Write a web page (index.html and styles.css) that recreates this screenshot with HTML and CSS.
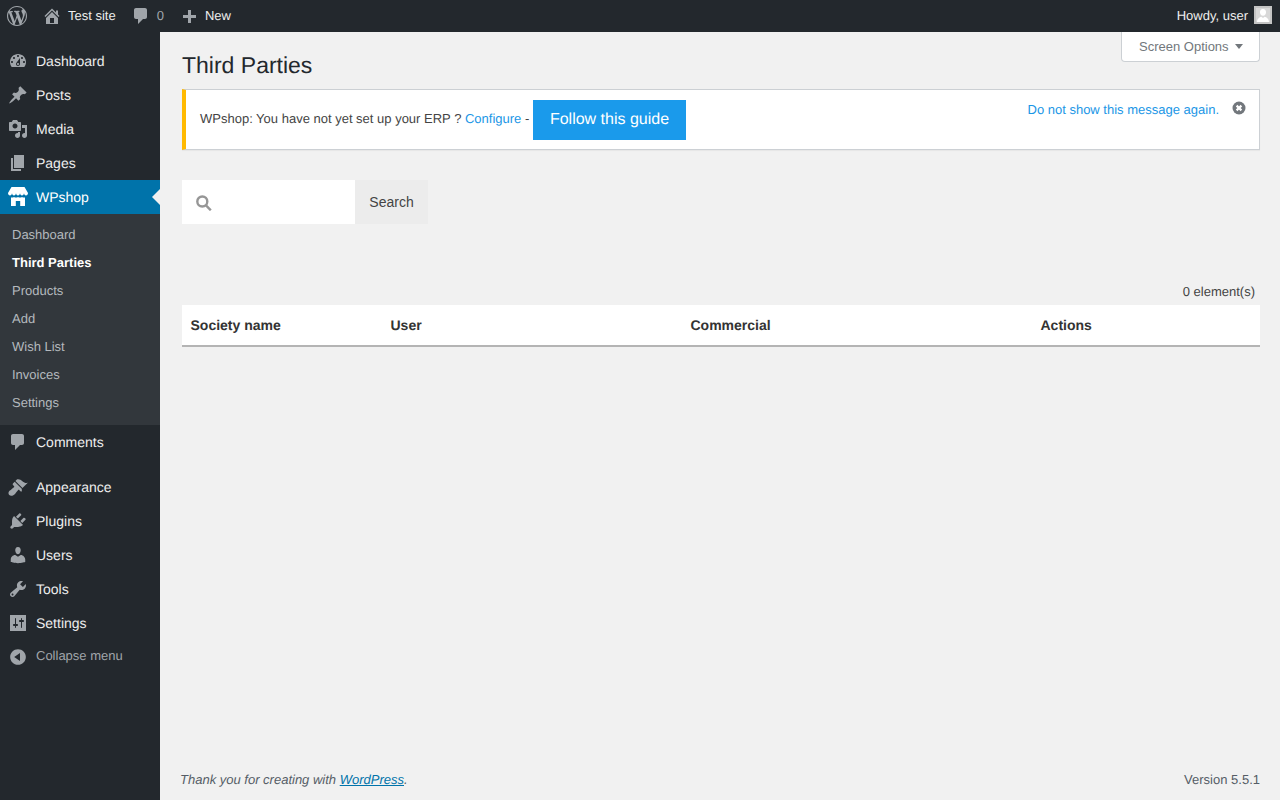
FILE: index.html
```html
<!DOCTYPE html>
<html lang="en">
<head>
    <meta charset="UTF-8">
    <meta name="viewport" content="width=device-width, initial-scale=1.0">
    <title>Third Parties</title>
    <link rel="stylesheet" href="styles.css">
</head>
<body>
    <header class="adminbar">
        <a class="bar-logo" href="#">
            <svg class="bar-icon" viewBox="0 0 20 20"><path d="M20 10c0-5.51-4.49-10-10-10C4.48 0 0 4.49 0 10c0 5.52 4.48 10 10 10 5.51 0 10-4.48 10-10zM7.78 15.37L4.37 6.22c.55-.02 1.17-.08 1.17-.08.5-.06.44-1.13-.06-1.11 0 0-1.45.11-2.37.11-.18 0-.37 0-.58-.01C4.12 2.69 6.87 1.11 10 1.11c2.33 0 4.45.87 6.05 2.34-.68-.11-1.65.39-1.65 1.58 0 .74.45 1.36.9 2.1.35.61.55 1.36.55 2.46 0 1.49-1.4 5-1.4 5l-3.03-8.37c.54-.02.82-.17.82-.17.5-.05.44-1.25-.06-1.22 0 0-1.44.12-2.38.12-.87 0-2.33-.12-2.33-.12-.5-.03-.56 1.2-.06 1.22l.92.08 1.26 3.41zM17.41 10c.24-.64.74-1.87.43-4.25.7 1.29 1.05 2.71 1.05 4.25 0 3.29-1.73 6.24-4.4 7.78.97-2.59 1.94-5.2 2.92-7.78zM6.1 18.09C3.12 16.65 1.11 13.53 1.11 10c0-1.3.23-2.48.72-3.59C3.25 10.3 4.67 14.2 6.1 18.09zm4.03-6.63l2.58 6.98c-.86.29-1.76.45-2.71.45-.79 0-1.57-.11-2.29-.33.81-2.38 1.62-4.74 2.42-7.1z"/></svg>
        </a>
        <a class="bar-item bar-home" href="#">
            <svg class="bar-icon" viewBox="0 0 20 20"><path d="M16 8.5l1.53 1.53-1.06 1.06L10 4.62l-6.47 6.47-1.06-1.06L10 2.5l4 4v-2h2v4zm-6-2.46l6 5.99V18H4v-5.97zM12 17v-5H8v5h4z"/></svg>
            Test site
        </a>
        <a class="bar-item bar-comments" href="#">
            <svg class="bar-icon" viewBox="0 0 20 20"><path d="M5 2h9c1.1 0 2 .9 2 2v7c0 1.1-.9 2-2 2h-2l-5 5v-5H5c-1.1 0-2-.9-2-2V4c0-1.1.9-2 2-2z"/></svg>
            0
        </a>
        <a class="bar-item" href="#">
            <svg class="bar-icon" viewBox="0 0 20 20"><path d="M17 9v3h-5v5H9v-5H4V9h5V4h3v5h5z"/></svg>
            New
        </a>
        <a class="bar-howdy" href="#">
            Howdy, user
            <span class="avatar">
                <svg viewBox="0 0 18 18"><path d="M0 0h18v18H0z" fill="#c4c4c4"/><path d="M2 2h14v14H2z" fill="#d8d8d8"/><path d="M9 3c2 0 3.300 1.700 3 3.800-.2 1.400-1 3-3 3s-2.800-1.600-3-3C5.700 4.700 7 3 9 3zM3 16c0-3 2.500-4.800 4.300-5.200L9 12l1.700-1.200C12.500 11.200 15 13 15 16z" fill="#fff"/></svg>
            </span>
        </a>
    </header>

    <div class="layout">
        <nav class="sidebar">
            <ul class="menu">
                <li class="menu-item">
                    <svg class="menu-icon" viewBox="0 0 20 20"><path d="M3.760 16h12.480c1.100-1.370 1.760-3.110 1.760-5 0-4.420-3.580-8-8-8s-8 3.580-8 8c0 1.890.660 3.630 1.760 5zM10 4c.55 0 1 .45 1 1s-.45 1-1 1-1-.45-1-1 .45-1 1-1zM6 6c.55 0 1 .45 1 1s-.45 1-1 1-1-.45-1-1 .45-1 1-1zm8 0c.55 0 1 .45 1 1s-.45 1-1 1-1-.45-1-1 .45-1 1-1zm-5.370 5.550L12 7v6c0 1.100-.9 2-2 2s-2-.9-2-2c0-.57.24-1.080.63-1.450zM4 10c.55 0 1 .45 1 1s-.45 1-1 1-1-.45-1-1 .45-1 1-1zm12 0c.55 0 1 .45 1 1s-.45 1-1 1-1-.45-1-1 .45-1 1-1zm-5 3c0-.55-.45-1-1-1s-1 .45-1 1 .45 1 1 1 1-.45 1-1z"/></svg>
                    Dashboard
                </li>
                <li class="menu-item">
                    <svg class="menu-icon" viewBox="0 0 20 20"><path d="M10.440 3.020l1.820-1.820 6.360 6.350-1.830 1.820c-1.050-.68-2.480-.57-3.410.36l-.75.75c-.92.93-1.040 2.350-.35 3.410l-1.830 1.820-2.410-2.410-2.800 2.790c-.42.42-3.380 2.710-3.800 2.290s1.860-3.390 2.280-3.810l2.790-2.790L4.100 9.360l1.830-1.820c1.050.69 2.480.57 3.400-.36l.75-.75c.93-.92 1.050-2.350.36-3.410z"/></svg>
                    Posts
                </li>
                <li class="menu-item">
                    <svg class="menu-icon" viewBox="0 0 20 20"><path d="M13 11V4c0-.55-.45-1-1-1h-1.670L9 1H5L3.670 3H2c-.55 0-1 .45-1 1v7c0 .55.45 1 1 1h10c.55 0 1-.45 1-1zM7 4.500c1.380 0 2.500 1.120 2.500 2.500S8.380 9.500 7 9.500 4.500 8.380 4.500 7 5.620 4.500 7 4.500zM14 6h5v10.500c0 1.380-1.120 2.500-2.500 2.500S14 17.880 14 16.500s1.120-2.500 2.500-2.500c.17 0 .34.02.5.05V9h-3V6zm-4 8.050V13h2v3.500c0 1.380-1.120 2.500-2.500 2.500S7 17.880 7 16.500 8.120 14 9.500 14c.17 0 .34.02.5.05z"/></svg>
                    Media
                </li>
                <li class="menu-item">
                    <svg class="menu-icon" viewBox="0 0 20 20"><path d="M6 15V2h10v13H6zm-1 1h8v2H3V5h2v11z"/></svg>
                    Pages
                </li>
                <li class="menu-item menu-current">
                    <svg class="menu-icon" viewBox="0 0 20 20"><path d="M3.500 0h13L20 6c0 1.400-.9 2.500-2 2.500S16 7.400 16 6c0 1.400-.9 2.500-2 2.500S12 7.400 12 6c0 1.400-.9 2.500-2 2.500S8 7.400 8 6c0 1.400-.9 2.500-2 2.500S4 7.400 4 6c0 1.400-.9 2.500-2 2.500S0 7.400 0 6zM3 10.500c1.200.3 2.200 0 3-.5 1.200.7 2.800.7 4 0 1.200.7 2.800.7 4 0 .8.5 1.800.8 3 .5V19h-4.800v-5H7.800v5H3z"/></svg>
                    WPshop
                </li>
                <li class="submenu">
                    <a href="#">Dashboard</a>
                    <a href="#" class="submenu-current">Third Parties</a>
                    <a href="#">Products</a>
                    <a href="#">Add</a>
                    <a href="#">Wish List</a>
                    <a href="#">Invoices</a>
                    <a href="#">Settings</a>
                </li>
                <li class="menu-item menu-gap">
                    <svg class="menu-icon" viewBox="0 0 20 20"><path d="M5 2h9c1.100 0 2 .9 2 2v7c0 1.100-.9 2-2 2h-2l-5 5v-5H5c-1.100 0-2-.9-2-2V4c0-1.100.9-2 2-2z"/></svg>
                    Comments
                </li>
                <li class="menu-item">
                    <svg class="menu-icon" viewBox="0 0 20 20"><path d="M14.480 11.060L7.410 3.990l1.500-1.500c.5-.56 2.300-.47 3.510.32 1.210.8 1.430 1.280 2.910 2.100 1.180.64 2.450 1.260 4.450.85zm-.71.71L6.700 4.700 4.930 6.470c-.39.39-.39 1.020 0 1.410l1.060 1.060c.39.39.39 1.030 0 1.420-.6.6-1.430 1.110-2.210 1.690-.35.26-.7.53-1.010.84C1.430 13.230.4 14.910.47 16.270c.06 1.360 1.300 2.390 2.660 2.420 1.390.02 3.050-1.030 4.330-2.310.3-.31.58-.66.84-1.010.58-.78 1.090-1.610 1.690-2.210.39-.39 1.030-.39 1.420 0l1.060 1.060c.39.39 1.020.39 1.410 0z"/></svg>
                    Appearance
                </li>
                <li class="menu-item">
                    <svg class="menu-icon" viewBox="0 0 20 20"><path d="M13.110 4.360L9.870 7.600 8 5.730l3.240-3.240c.35-.34 1.050-.2 1.560.32.52.51.66 1.210.31 1.550zm-8 1.770l.91-1.120 9.010 9.010-1.190.84c-.71.71-2.630 1.160-3.820 1.160H6.140L4.900 17.260c-.59.59-1.540.59-2.120 0-.59-.58-.59-1.530 0-2.120l1.240-1.240v-3.880c0-1.130.4-3.190 1.090-3.890zm7.260 3.970l3.240-3.240c.34-.35 1.040-.21 1.550.31.52.51.66 1.210.31 1.550l-3.240 3.250z"/></svg>
                    Plugins
                </li>
                <li class="menu-item">
                    <svg class="menu-icon" viewBox="0 0 20 20"><path d="M10 9.250c-2.270 0-2.730-3.440-2.730-3.440C7 4.020 7.820 2 9.970 2c2.160 0 2.980 2.020 2.710 3.810 0 0-.41 3.440-2.680 3.440zm0 2.570L12.720 10c2.390 0 4.520 2.330 4.520 4.530v2.490s-3.650 1.130-7.240 1.130c-3.650 0-7.240-1.130-7.240-1.130v-2.490c0-2.250 1.940-4.480 4.470-4.480z"/></svg>
                    Users
                </li>
                <li class="menu-item">
                    <svg class="menu-icon" viewBox="0 0 20 20"><path d="M16.680 9.770c-1.340 1.340-3.300 1.670-4.950.99l-5.410 6.520c-.99.99-2.590.99-3.580 0s-.99-2.590 0-3.570l6.520-5.420c-.68-1.650-.35-3.610.99-4.950 1.280-1.280 3.120-1.620 4.720-1.060l-2.890 2.890 2.820 2.820 2.860-2.870c.53 1.580.18 3.390-1.080 4.650zM3.810 16.210c.4.39 1.040.39 1.430 0 .4-.4.4-1.040 0-1.430-.39-.4-1.030-.4-1.430 0-.39.39-.39 1.030 0 1.430z"/></svg>
                    Tools
                </li>
                <li class="menu-item">
                    <svg class="menu-icon" viewBox="0 0 20 20"><path d="M18 16V2H2v16h16zM8 11h1c.55 0 1 .45 1 1s-.45 1-1 1H8v1.500c0 .28-.22.5-.5.5s-.5-.22-.5-.5V13H6c-.55 0-1-.45-1-1s.45-1 1-1h1V5.500c0-.28.22-.5.5-.5s.5.22.5.5V11zm5-2h-1c-.55 0-1-.45-1-1s.45-1 1-1h1V5.500c0-.28.22-.5.5-.5s.5.22.5.5V7h1c.55 0 1 .45 1 1s-.45 1-1 1h-1v5.500c0 .28-.22.5-.5.5s-.5-.22-.5-.5V9z"/></svg>
                    Settings
                </li>
                <li class="menu-collapse">
                    <svg class="menu-icon" viewBox="0 0 20 20"><path d="M10 2.160c4.330 0 7.840 3.510 7.840 7.840s-3.510 7.840-7.840 7.840S2.160 14.330 2.160 10 5.710 2.160 10 2.160zm2 11.720V6.120L6.180 9.970z"/></svg>
                    <span class="collapse-label">Collapse menu</span>
                </li>
            </ul>
        </nav>

        <main class="content">
            <div class="wrap">
                <button class="screen-options">Screen Options <span class="caret"></span></button>
                <h1>Third Parties</h1>

                <div class="notice">
                    <p class="notice-text">WPshop: You have not yet set up your ERP ? <a href="#">Configure</a> - <a href="#" class="guide-btn">Follow this guide</a></p>
                    <div class="notice-dismiss">
                        <a href="#">Do not show this message again.</a>
                        <svg class="close-icon" viewBox="0 0 14 14"><circle cx="7" cy="7" r="6.500"/><path d="M4.600 4.600l4.800 4.800M9.400 4.600l-4.800 4.800"/></svg>
                    </div>
                </div>

                <form class="search-bar">
                    <div class="search-input">
                        <svg class="search-icon" viewBox="0 0 16 16"><circle cx="6.300" cy="6.500" r="5"/><path d="M10 10.300l4.800 5"/></svg>
                    </div>
                    <button type="button" class="search-btn">Search</button>
                </form>

                <p class="count">0 element(s)</p>
                <table class="list">
                    <thead>
                        <tr>
                            <th class="col-society">Society name</th>
                            <th class="col-user">User</th>
                            <th class="col-commercial">Commercial</th>
                            <th>Actions</th>
                        </tr>
                    </thead>
                </table>
            </div>

            <footer class="footer">
                <span class="thanks">Thank you for creating with <a href="#">WordPress</a>.</span>
                <span>Version 5.5.1</span>
            </footer>
        </main>
    </div>
</body>
</html>
```

FILE: styles.css
```css
* {
    box-sizing: border-box;
}

html, body {
    height: 100%;
}

body {
    margin: 0;
    background: #f1f1f1;
    color: #444;
    font-family: "Liberation Sans", Arial, sans-serif;
    font-size: 13px;
    text-rendering: geometricPrecision;
    overflow: hidden;
}

a {
    color: #1a96e6;
    text-decoration: none;
}

/* admin bar */
.adminbar {
    display: flex;
    align-items: center;
    height: 32px;
    background: #23282d;
    color: #eee;
}

.adminbar a {
    color: #eee;
    display: flex;
    align-items: center;
}

.bar-icon {
    width: 20px;
    height: 20px;
    fill: #a0a5aa;
}

.bar-logo {
    padding: 0 7px;
    height: 32px;
}

.bar-item {
    gap: 6px;
    padding: 0 7px 2px 8px;
    height: 32px;
}

.bar-item .bar-icon {
    margin-bottom: -2px;
}

.adminbar .bar-comments {
    color: #a0a5aa;
}

.bar-howdy {
    margin-left: auto;
    height: 32px;
    padding: 0 8px 2px 0;
    gap: 6px;
}

.avatar {
    display: block;
    width: 18px;
    height: 18px;
}

.avatar svg {
    display: block;
    width: 18px;
    height: 18px;
}

.layout {
    display: flex;
    height: calc(100% - 32px);
}

/* left menu */
.sidebar {
    width: 160px;
    flex-shrink: 0;
    background: #23282d;
    padding-top: 12px;
}

.menu {
    list-style: none;
    margin: 0;
    padding: 0;
}

.menu-item {
    display: flex;
    align-items: center;
    gap: 8px;
    height: 34px;
    padding-left: 8px;
    color: #eee;
    font-size: 14px;
    position: relative;
}

.menu-icon {
    width: 20px;
    height: 20px;
    fill: #a0a5aa;
    flex-shrink: 0;
}

.menu-current {
    background: #0073aa;
    color: #fff;
}

.menu-current .menu-icon {
    fill: #fff;
}

.menu-current::after {
    content: "";
    position: absolute;
    right: 0;
    top: 9px;
    border: 8px solid transparent;
    border-left: 0;
    border-right-color: #f1f1f1;
}

.submenu {
    background: #32373c;
    padding: 7px 0 8px;
}

.submenu a {
    display: block;
    height: 28px;
    line-height: 28px;
    padding-left: 12px;
    color: #b4b9be;
}

.submenu a.submenu-current {
    color: #fff;
    font-weight: bold;
}

.menu-gap {
    margin-bottom: 11px;
}

.menu-collapse {
    display: flex;
    align-items: center;
    gap: 8px;
    height: 34px;
    padding-left: 8px;
    color: #a0a5aa;
}

.collapse-label {
    padding-bottom: 3px;
}

/* main area */
.content {
    flex: 1;
    display: flex;
    flex-direction: column;
    min-width: 0;
}

.wrap {
    flex: 1;
    margin: 0 20px 0 22px;
}

.screen-options {
    float: right;
    display: flex;
    align-items: center;
    gap: 6px;
    width: 139px;
    height: 30px;
    padding: 0 0 0 17px;
    background: #fff;
    border: 1px solid #ccd0d4;
    border-top: 0;
    border-radius: 0 0 4px 4px;
    color: #72777c;
    font-family: inherit;
    font-size: 13px;
}

.caret {
    border: 4px solid transparent;
    border-top: 5px solid #72777c;
    border-bottom: 0;
}

h1 {
    margin: 0;
    padding: 19px 0 9px;
    color: #23282d;
    font-size: 23px;
    font-weight: 400;
    line-height: 29px;
}

.notice {
    display: flex;
    justify-content: space-between;
    height: 61px;
    background: #fff;
    border: 1px solid #ccd0d4;
    border-left: 4px solid #ffb900;
    box-shadow: 0 1px 1px rgba(0, 0, 0, 0.04);
    padding: 10px 13px 0 14px;
}

.notice-text {
    margin: 0;
    display: flex;
    align-items: center;
    height: 40px;
    padding-bottom: 4px;
    white-space: pre;
}

.guide-btn {
    display: block;
    align-self: flex-start;
    height: 40px;
    line-height: 40px;
    padding: 0 17px;
    background: #1a9aeb;
    color: #fff;
    font-size: 16px;
}

.notice-dismiss {
    display: flex;
    align-items: flex-start;
    gap: 13px;
    padding-top: 2px;
}

.close-icon {
    width: 14px;
    height: 14px;
    margin-top: -1px;
    fill: #72777c;
    stroke: none;
}

.close-icon path {
    fill: none;
    stroke: #fff;
    stroke-width: 2.200;
}

.search-bar {
    display: flex;
    width: 246px;
    height: 44px;
    margin-top: 30px;
}

.search-input {
    display: flex;
    align-items: center;
    width: 173px;
    background: #fff;
    padding: 2px 0 0 14px;
}

.search-icon {
    width: 16px;
    height: 16px;
    fill: none;
    stroke: #969696;
    stroke-width: 2.400;
}

.search-btn {
    flex: 1;
    background: #ececec;
    border: 0;
    color: #444;
    font-family: inherit;
    font-size: 14px;
}

.count {
    margin: 60px 0 0;
    padding-right: 5px;
    height: 21px;
    line-height: 15px;
    text-align: right;
    color: #444;
}

.list {
    width: 100%;
    height: 42px;
    border-collapse: collapse;
    background: #fff;
    table-layout: fixed;
    border-bottom: 2px solid #b4b4b4;
}

.list th {
    padding: 0 8.500px;
    text-align: left;
    font-size: 14px;
    color: #333;
}

.col-society {
    width: 200px;
}

.col-user {
    width: 300px;
}

.col-commercial {
    width: 350px;
}

.footer {
    display: flex;
    justify-content: space-between;
    padding: 0 20px 12px;
    line-height: 16px;
    color: #555d66;
}

.thanks {
    font-style: italic;
}

.thanks a {
    color: #0073aa;
    text-decoration: underline;
}
```
